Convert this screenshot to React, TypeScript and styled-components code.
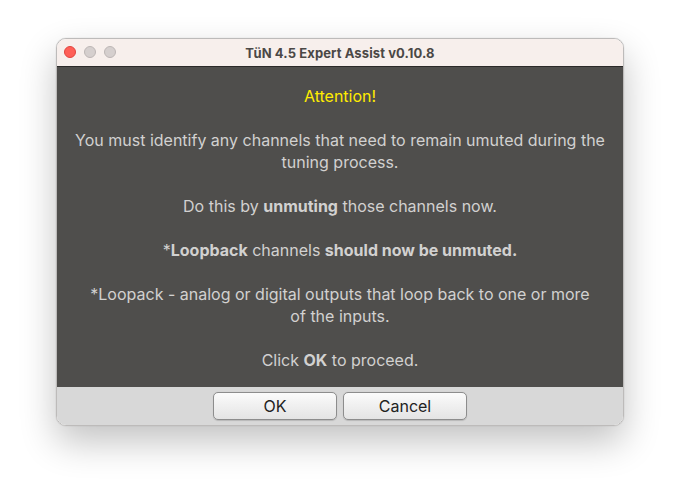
import React from "react";
import styled, { createGlobalStyle } from "styled-components";

const Global = createGlobalStyle`
  html, body { margin: 0; padding: 0; background: #ffffff; }
  body { font-family: Inter, "Noto Sans", "Liberation Sans", sans-serif; -webkit-font-smoothing: antialiased; }
`;

const Page = styled.div`
  width: 680px;
  height: 500px;
  display: flex;
  justify-content: center;
  padding-top: 38px;
  box-sizing: border-box;
`;

const Window = styled.div`
  width: 568px;
  height: 388px;
  box-sizing: border-box;
  border: 1px solid #bdbbba;
  border-radius: 10px;
  overflow: hidden;
  display: flex;
  flex-direction: column;
  box-shadow: 0 16px 36px rgba(0, 0, 0, 0.24), 0 0 1px rgba(0, 0, 0, 0.3);
`;

const TitleBar = styled.div`
  height: 27px;
  flex: none;
  background: #f7efec;
  border-bottom: 1px solid #2b2a29;
  display: flex;
  align-items: center;
  position: relative;
`;

const Lights = styled.div`
  display: flex;
  gap: 8px;
  padding-left: 7px;
  position: absolute;
  left: 0;
  top: 7px;
`;

const Light = styled.span<{ $color: string; $ring: string }>`
  width: 12px;
  height: 12px;
  border-radius: 50%;
  box-sizing: border-box;
  background: ${(p) => p.$color};
  border: 0.5px solid ${(p) => p.$ring};
`;

const Title = styled.div`
  flex: 1;
  text-align: center;
  font-size: 13px;
  font-weight: 700;
  color: #4b4846;
  letter-spacing: 0.1px;
`;

const Content = styled.div`
  flex: 1;
  background: #4f4e4c;
  color: #d2d1d0;
  font-size: 16px;
  line-height: 22px;
  text-align: center;
  padding-top: 18px;
  display: flex;
  flex-direction: column;
  gap: 22px;
`;

const Para = styled.p<{ $accent?: boolean }>`
  margin: 0;
  white-space: nowrap;
  color: ${(p) => (p.$accent ? "#ffec00" : "inherit")};
`;

const Footer = styled.div`
  height: 38px;
  flex: none;
  background: #d8d8d8;
  display: flex;
  justify-content: center;
  align-items: center;
  gap: 6px;
  box-sizing: border-box;
`;

const Button = styled.button`
  width: 124px;
  height: 28px;
  box-sizing: border-box;
  border: 1px solid #8d8d8d;
  border-radius: 5px;
  background: linear-gradient(#fbfbfb, #e4e4e4);
  font-family: Inter, "Noto Sans", "Liberation Sans", sans-serif;
  font-size: 16px;
  color: #222222;
  padding: 0;
  box-shadow: 0 0.5px 1px rgba(0, 0, 0, 0.15);
`;

export default function App() {
  return (
    <>
      <Global />
      <Page>
        <Window>
          <TitleBar>
            <Lights>
              <Light $color="#fe5f57" $ring="#e0443e" />
              <Light $color="#d5cfce" $ring="#bcb6b5" />
              <Light $color="#d5cfce" $ring="#bcb6b5" />
            </Lights>
            <Title>TüN 4.5 Expert Assist v0.10.8</Title>
          </TitleBar>
          <Content>
            <Para $accent>Attention!</Para>
            <Para>
              You must identify any channels that need to remain umuted during the
              <br />
              tuning process.
            </Para>
            <Para>
              Do this by <b>unmuting</b> those channels now.
            </Para>
            <Para>
              *<b>Loopback</b> channels <b>should now be unmuted.</b>
            </Para>
            <Para>
              *Loopack - analog or digital outputs that loop back to one or more
              <br />
              of the inputs.
            </Para>
            <Para>
              Click <b>OK</b> to proceed.
            </Para>
          </Content>
          <Footer>
            <Button>OK</Button>
            <Button>Cancel</Button>
          </Footer>
        </Window>
      </Page>
    </>
  );
}
